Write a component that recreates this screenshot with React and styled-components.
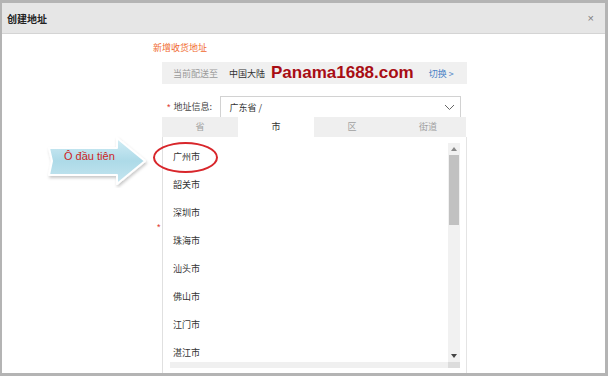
import React from "react";
import styled, { createGlobalStyle } from "styled-components";

const GlobalStyle = createGlobalStyle`
  html, body {
    margin: 0;
    padding: 0;
    background: #ffffff;
    font-family: "Noto Sans CJK SC", "Liberation Sans", sans-serif;
  }
`;

const Frame = styled.div`
  position: relative;
  width: 608px;
  height: 376px;
  box-sizing: border-box;
  border: 3px solid #b4b4b4;
  border-left-width: 2px;
  background: #ffffff;
  overflow: hidden;
`;

const Header = styled.div`
  height: 30px;
  display: flex;
  align-items: center;
  justify-content: space-between;
  padding: 0 11px 0 5px;
  background: #e6e6e6;
  border-bottom: 1px solid #d4d4d4;
`;

const Title = styled.div`
  font-size: 10px;
  font-weight: bold;
  color: #222;
`;

const Close = styled.span`
  font-family: "Liberation Sans", sans-serif;
  font-size: 11px;
  color: #808080;
`;

const Body = styled.div`
  padding: 8px 0 0 151px;
`;

const Heading = styled.div`
  font-size: 9px;
  line-height: 12px;
  color: #f06a2e;
`;

const DeliveryBar = styled.div`
  width: 305px;
  height: 22px;
  margin: 8px 0 0 9px;
  padding-left: 11px;
  box-sizing: border-box;
  display: flex;
  align-items: center;
  background: #f0f0f0;
`;

const BarText = styled.span`
  font-size: 9px;
  color: ${(p) => p.$color || "#333"};
  margin-right: ${(p) => p.$gap || 0}px;
`;

const Brand = styled.span`
  font-family: "Liberation Sans", sans-serif;
  font-size: 17px;
  font-weight: bold;
  color: #a80d14;
  margin-right: 15px;
`;

const Row = styled.div`
  display: flex;
  align-items: center;
  margin: 12px 0 0 14px;
`;

const Star = styled.span`
  font-family: "Liberation Sans", sans-serif;
  font-size: 9px;
  color: #e0321e;
  margin-right: 3px;
`;

const Label = styled.span`
  font-size: 9px;
  color: #444;
  width: 46px;
`;

const Select = styled.div`
  width: 241px;
  height: 21px;
  box-sizing: border-box;
  border: 1px solid #d2d2d2;
  border-bottom: none;
  display: flex;
  align-items: center;
  justify-content: space-between;
  padding: 0 5px 0 9px;
  font-size: 9px;
  color: #333;
`;

const Tabs = styled.div`
  width: 304px;
  margin-left: 9px;
  display: flex;
  background: #efefef;
`;

const Tab = styled.div`
  flex: 1;
  height: 20px;
  line-height: 20px;
  text-align: center;
  font-size: 9px;
  color: ${(p) => (p.$active ? "#333" : "#a0a0a0")};
  background: ${(p) => (p.$active ? "#ffffff" : "transparent")};
`;

const ListPanel = styled.div`
  width: 305px;
  height: 236px;
  margin-left: 9px;
  box-sizing: border-box;
  border-left: 1px solid #e0e0e0;
  border-right: 1px solid #e4e4e4;
  display: flex;
`;

const ItemsCol = styled.div`
  flex: 1;
  display: flex;
  flex-direction: column;
`;

const Items = styled.div`
  height: 219px;
  margin-top: 6px;
  overflow: hidden;
`;

const Item = styled.div`
  height: 28px;
  line-height: 28px;
  padding-left: 10px;
  font-size: 9px;
  color: #333;
`;

const HScroll = styled.div`
  height: 6px;
  margin-left: 7px;
  background: #f0f0f0;
`;

const ScrollCol = styled.div`
  width: 12px;
  margin-right: 6px;
  display: flex;
  flex-direction: column;
  padding-top: 6px;
`;

const VScroll = styled.div`
  height: 219px;
  display: flex;
  flex-direction: column;
  background: #f1f1f1;
`;

const ArrowBtn = styled.div`
  height: 12px;
  display: flex;
  align-items: center;
  justify-content: center;
`;

const Thumb = styled.div`
  height: 70px;
  margin: 0 1px;
  background: #c1c1c1;
`;

const Track = styled.div`
  flex: 1;
`;

const Corner = styled.div`
  height: 6px;
  background: #dcdcdc;
`;

const Callout = styled.svg`
  position: absolute;
  left: 42px;
  top: 127px;
`;

const Ring = styled.div`
  position: absolute;
  left: 151px;
  top: 139px;
  width: 65px;
  height: 31px;
  box-sizing: border-box;
  border: 2px solid #d8262b;
  border-radius: 50%;
`;

const StrayStar = styled.span`
  position: absolute;
  left: 155px;
  top: 219px;
  font-family: "Liberation Sans", sans-serif;
  font-size: 9px;
  color: #e0321e;
`;

const cities = ["广州市", "韶关市", "深圳市", "珠海市", "汕头市", "佛山市", "江门市", "湛江市"];
const tabs = ["省", "市", "区", "街道"];

const Tri = ({ down }) => (
  <svg width="6" height="4" viewBox="0 0 6 4">
    <polygon points={down ? "0,0 6,0 3,4" : "0,4 6,4 3,0"} fill={down ? "#444" : "#888"} />
  </svg>
);

export default function App() {
  return (
    <>
      <GlobalStyle />
      <Frame>
        <Header>
          <Title>创建地址</Title>
          <Close>×</Close>
        </Header>
        <Body>
          <Heading>新增收货地址</Heading>
          <DeliveryBar>
            <BarText $color="#9a9a9a" $gap={11}>当前配送至</BarText>
            <BarText $gap={6}>中国大陆</BarText>
            <Brand>Panama1688.com</Brand>
            <BarText $color="#4a82c6">切换 &gt;</BarText>
          </DeliveryBar>
          <Row>
            <Star>*</Star>
            <Label>地址信息:</Label>
            <Select>
              <span>广东省 /</span>
              <svg width="11" height="7" viewBox="0 0 11 7">
                <polyline points="1,1 5.5,5.5 10,1" fill="none" stroke="#666" strokeWidth="1" />
              </svg>
            </Select>
          </Row>
          <Tabs>
            {tabs.map((t) => (
              <Tab key={t} $active={t === "市"}>{t}</Tab>
            ))}
          </Tabs>
          <ListPanel>
            <ItemsCol>
              <Items>
                {cities.map((c) => (
                  <Item key={c}>{c}</Item>
                ))}
              </Items>
              <HScroll />
            </ItemsCol>
            <ScrollCol>
              <VScroll>
                <ArrowBtn><Tri /></ArrowBtn>
                <Thumb />
                <Track />
                <ArrowBtn><Tri down /></ArrowBtn>
              </VScroll>
              <Corner />
            </ScrollCol>
          </ListPanel>
        </Body>

        <Callout width="110" height="58" viewBox="0 0 110 58">
          <defs>
            <linearGradient id="arrowFill" x1="0" y1="0" x2="0" y2="1">
              <stop offset="0" stopColor="#d2edf5" />
              <stop offset="0.5" stopColor="#addae8" />
              <stop offset="1" stopColor="#c6e6f0" />
            </linearGradient>
            <filter id="soft" x="-10%" y="-20%" width="130%" height="150%">
              <feDropShadow dx="1" dy="2" stdDeviation="1.5" floodColor="#000" floodOpacity="0.22" />
            </filter>
          </defs>
          <polygon
            points="5,18 73,18 73,8 101,31 73,54 73,45 5,45 8,31"
            fill="url(#arrowFill)"
            stroke="#ffffff"
            strokeWidth="2"
            strokeLinejoin="round"
            filter="url(#soft)"
          />
          <text x="20" y="30" fontFamily="Liberation Sans, sans-serif" fontSize="11" fill="#cc1f24">
            Ô đầu tiên
          </text>
        </Callout>
        <Ring />
        <StrayStar>*</StrayStar>
      </Frame>
    </>
  );
}
